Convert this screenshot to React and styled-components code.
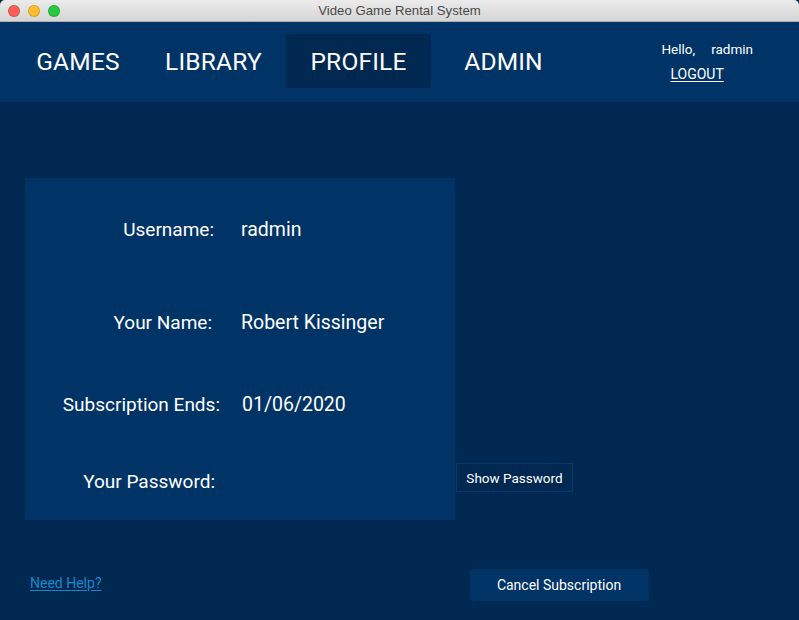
import React from "react";
import styled, { createGlobalStyle } from "styled-components";

const Global = createGlobalStyle`
  html, body { margin: 0; padding: 0; background: #002850; }
  body { font-family: Roboto, "Noto Sans", "Liberation Sans", sans-serif; }
  * { box-sizing: border-box; }
`;

const Window = styled.div`
  width: 799px;
  height: 620px;
  display: flex;
  flex-direction: column;
  background: #002850;
  overflow: hidden;
  border-radius: 5px 5px 0 0;
`;

const TitleBar = styled.div`
  height: 22px;
  flex: none;
  display: flex;
  align-items: center;
  position: relative;
  background: linear-gradient(#ebebeb, #d5d5d5);
  border-bottom: 1px solid #b1b1b1;
`;

const Lights = styled.div`
  display: flex;
  gap: 8px;
  padding-left: 8px;
`;

const Light = styled.span`
  width: 12px;
  height: 12px;
  border-radius: 50%;
  background: ${(p) => p.$c};
  border: 0.5px solid rgba(0, 0, 0, 0.15);
`;

const Title = styled.div`
  position: absolute;
  left: 0;
  right: 0;
  text-align: center;
  font-family: "Liberation Sans", "Noto Sans", sans-serif;
  font-size: 13.2px;
  color: #4a4a4a;
  pointer-events: none;
`;

const NavBar = styled.nav`
  height: 80px;
  flex: none;
  background: #003366;
  display: flex;
  align-items: flex-start;
  padding-left: 11px;
`;

const Tab = styled.div`
  width: ${(p) => p.$w}px;
  margin-right: ${(p) => p.$after || 0}px;
  height: 54px;
  margin-top: 12px;
  display: flex;
  align-items: center;
  justify-content: center;
  font-size: 24.5px;
  color: #ffffff;
  letter-spacing: 0.2px;
  border-radius: 3px;
  background: ${(p) => (p.$active ? "#002850" : "transparent")};
`;

const UserBox = styled.div`
  margin-left: auto;
  padding-right: 46px;
  padding-top: 19px;
  display: flex;
  flex-direction: column;
  color: #ffffff;
  font-size: 13.5px;
`;

const Hello = styled.div`
  display: flex;
  gap: 16px;
  height: 16px;
  align-items: center;
`;

const Logout = styled.a`
  margin-top: 9px;
  margin-left: 9px;
  color: #ffffff;
  text-decoration: underline;
  text-underline-offset: 2px;
  font-size: 14px;
`;

const Body = styled.main`
  flex: 1;
  display: flex;
  flex-direction: column;
  padding: 76px 0 0 25px;
`;

const Content = styled.div`
  display: flex;
  align-items: flex-end;
`;

const Panel = styled.section`
  width: 430px;
  height: 342px;
  background: #003366;
  display: flex;
  flex-direction: column;
`;

const Row = styled.div`
  display: grid;
  grid-template-columns: 196px 1fr;
  column-gap: ${(p) => p.$gap}px;
  align-items: center;
  height: 40px;
  margin-top: ${(p) => p.$top}px;
  color: #ffffff;
`;

const Label = styled.div`
  text-align: right;
  font-size: 19px;
  padding-right: ${(p) => p.$pr}px;
`;

const Value = styled.div`
  font-size: 19.5px;
`;

const ShowButton = styled.button`
  margin-bottom: 28px;
  margin-left: 1px;
  width: 117px;
  height: 29px;
  background: #002850;
  border: 1px solid #0a3a6c;
  color: #ffffff;
  font-family: Roboto, "Liberation Sans", sans-serif;
  font-size: 13.5px;
  padding: 0;
`;

const Footer = styled.div`
  display: flex;
  align-items: center;
  margin-top: 49px;
`;

const HelpLink = styled.a`
  margin-left: 5px;
  margin-top: -4px;
  color: #1589cf;
  font-size: 14px;
  text-decoration: underline;
  text-underline-offset: 2px;
`;

const CancelButton = styled.button`
  margin-left: 368px;
  width: 179px;
  height: 32px;
  background: #003366;
  border: none;
  border-radius: 3px;
  color: #ffffff;
  font-family: Roboto, "Liberation Sans", sans-serif;
  font-size: 14px;
  padding: 0;
`;

const tabs = [
  { name: "GAMES", w: 134 },
  { name: "LIBRARY", w: 137, after: 4 },
  { name: "PROFILE", w: 145, active: true },
  { name: "ADMIN", w: 145 },
];

const rows = [
  { label: "Username:", value: "radmin", top: 31, pr: 7, gap: 20 },
  { label: "Your Name:", value: "Robert Kissinger", top: 53, pr: 9, gap: 20 },
  { label: "Subscription Ends:", value: "01/06/2020", top: 42, pr: 1, gap: 21 },
  { label: "Your Password:", value: "", top: 37, pr: 6, gap: 20 },
];

export default function App() {
  return (
    <>
      <Global />
      <Window>
        <TitleBar>
          <Lights>
            <Light $c="#fe5f57" />
            <Light $c="#febc2e" />
            <Light $c="#28c840" />
          </Lights>
          <Title>Video Game Rental System</Title>
        </TitleBar>
        <NavBar>
          {tabs.map((t) => (
            <Tab key={t.name} $w={t.w} $after={t.after} $active={t.active}>
              {t.name}
            </Tab>
          ))}
          <UserBox>
            <Hello>
              <span>Hello,</span>
              <span>radmin</span>
            </Hello>
            <Logout>LOGOUT</Logout>
          </UserBox>
        </NavBar>
        <Body>
          <Content>
            <Panel>
              {rows.map((r) => (
                <Row key={r.label} $top={r.top} $gap={r.gap}>
                  <Label $pr={r.pr}>{r.label}</Label>
                  <Value>{r.value}</Value>
                </Row>
              ))}
            </Panel>
            <ShowButton>Show Password</ShowButton>
          </Content>
          <Footer>
            <HelpLink>Need Help?</HelpLink>
            <CancelButton>Cancel Subscription</CancelButton>
          </Footer>
        </Body>
      </Window>
    </>
  );
}
